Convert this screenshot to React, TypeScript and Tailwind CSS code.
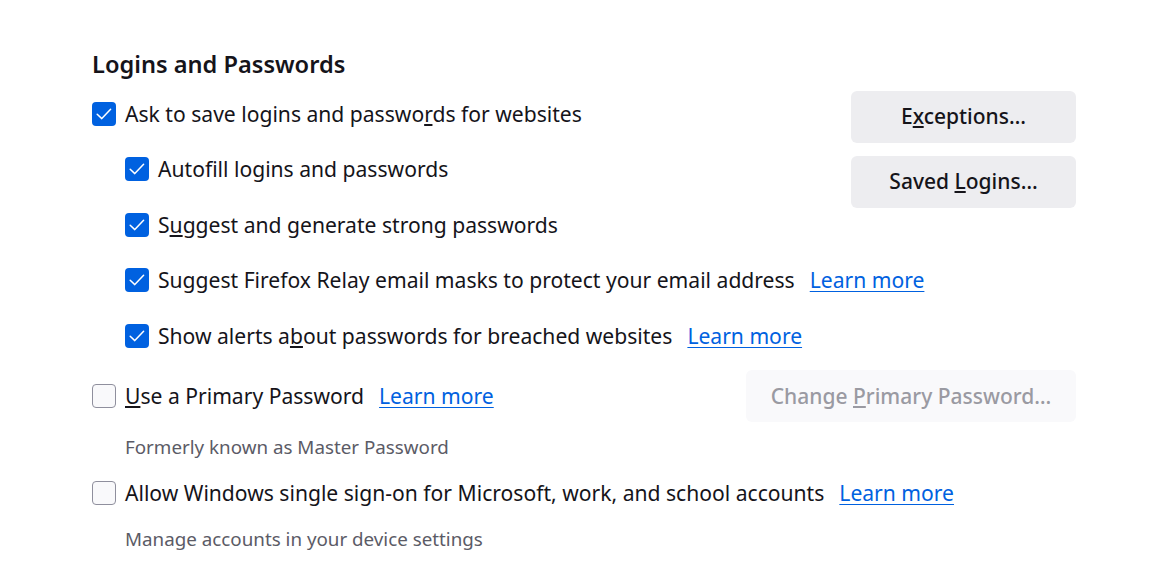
import React from 'react'

const FONT = { fontFamily: '"Noto Sans", "Open Sans", sans-serif' }

function Box({ checked }: { checked: boolean }) {
  if (!checked) {
    return <span className="w-[24px] h-[24px] shrink-0 rounded-[4px] border border-[#8f8f9d] bg-[#f9f9fb]" />
  }
  return (
    <span className="w-[24px] h-[24px] shrink-0 rounded-[4px] bg-[#0061e0] flex items-center justify-center">
      <svg width="20" height="20" viewBox="0 0 20 20" fill="none">
        <path d="M3.2 10.2 L7.8 14.6 L16.6 5.2" stroke="white" strokeWidth="1.5" strokeLinecap="round" strokeLinejoin="round" />
      </svg>
    </span>
  )
}

function Learn() {
  return <a className="text-[#0061e0] underline underline-offset-[3px] decoration-1 ml-[15px] whitespace-nowrap">Learn more</a>
}

function Row({ checked, children, link, className = '' }: { checked: boolean; children: React.ReactNode; link?: boolean; className?: string }) {
  return (
    <div className={`flex items-center h-[55.5px] whitespace-nowrap ${className}`}>
      <Box checked={checked} />
      <span className="ml-[9px] whitespace-nowrap">{children}</span>
      {link && <Learn />}
    </div>
  )
}

function Btn({ children, disabled }: { children: React.ReactNode; disabled?: boolean }) {
  return (
    <button
      className={`h-[52px] rounded-[6px] font-medium text-[21px] ${
        disabled ? 'bg-[#f9f9fb] text-[#9a9aa2]' : 'bg-[#ededf0] text-[#15141a]'
      }`}
    >
      {children}
    </button>
  )
}

export default function App() {
  return (
    <div className="min-h-screen bg-white text-[#15141a] text-[21.1px]" style={FONT}>
      <div className="pl-[92px] pr-[88px] pt-[46px]">
        <h1 className="text-[23.6px] font-semibold leading-[36px] h-[40px]">Logins and Passwords</h1>

        <div className="flex">
          <div className="flex flex-col flex-1 min-w-0">
            <Row checked>Ask to save logins and passwo<u>r</u>ds for websites</Row>
            <div className="pl-[33px] flex flex-col">
              <Row checked>Autof<u>i</u>ll logins and passwords</Row>
              <Row checked>S<u>u</u>ggest and generate strong passwords</Row>
              <Row checked link>Suggest Firefox Relay email masks to protect your email address</Row>
              <Row checked link>Show alerts a<u>b</u>out passwords for breached websites</Row>
            </div>
          </div>
          <div className="flex flex-col shrink-0 gap-[13px] w-[225px] pt-[5px]">
            <Btn>E<u>x</u>ceptions…</Btn>
            <Btn>Saved <u>L</u>ogins…</Btn>
          </div>
        </div>

        <div className="flex justify-between items-center mt-[5px]">
          <Row checked={false} link className="h-[52px]"><u>U</u>se a Primary Password</Row>
          <div className="w-[330px] shrink-0 flex flex-col">
            <Btn disabled>Change <u>P</u>rimary Password…</Btn>
          </div>
        </div>

        <p className="pl-[33px] text-[18.8px] text-[#5b5b66] mt-[11px] leading-[24px]">Formerly known as Master Password</p>

        <Row checked={false} link className="h-[48px] mt-[6px]">Allow Windows single sign-on for Microsoft, work, and school accounts</Row>

        <p className="pl-[33px] text-[18.8px] text-[#5b5b66] mt-[6px] leading-[24px]">Manage accounts in your device settings</p>
      </div>
    </div>
  )
}
